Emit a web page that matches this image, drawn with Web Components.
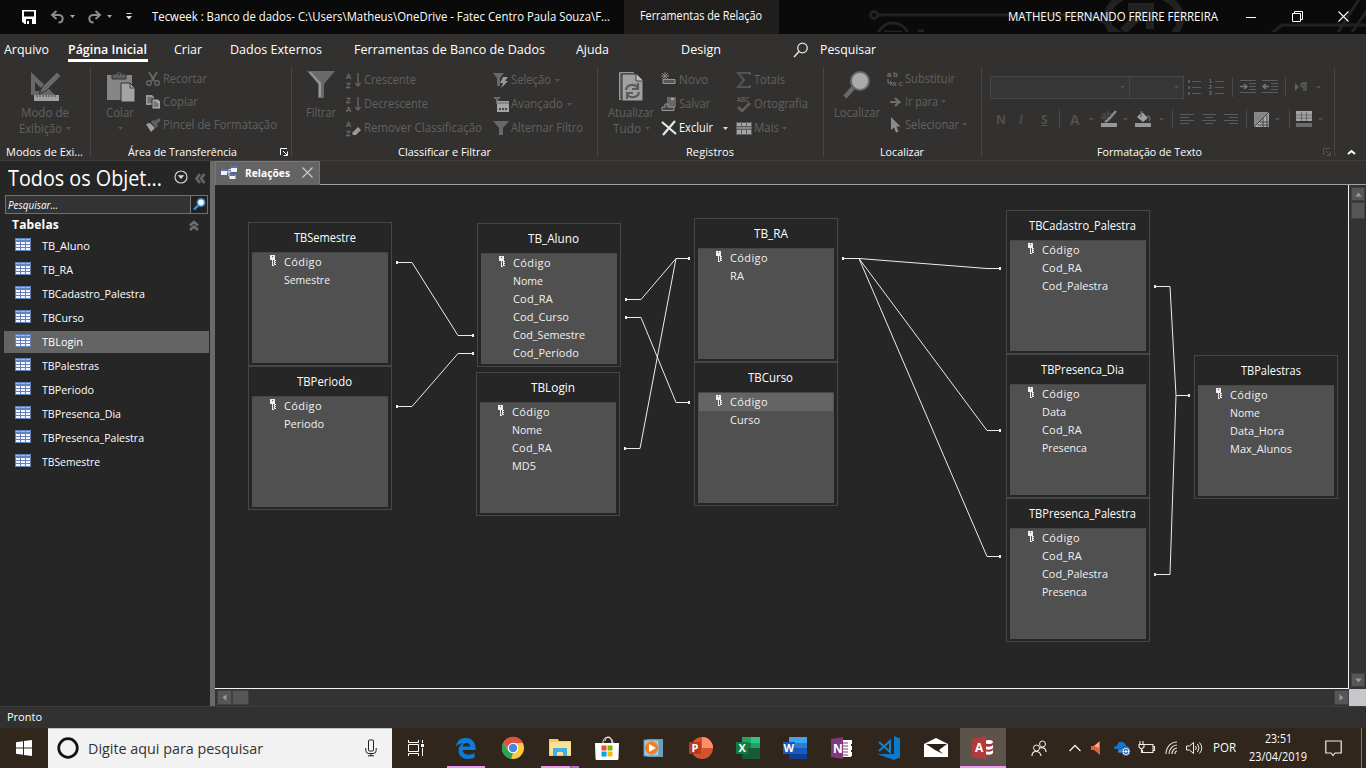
<!DOCTYPE html>
<html lang="pt-BR">
<head>
<meta charset="utf-8">
<title>Tecweek : Banco de dados</title>
<style>
html,body{margin:0;height:768px;overflow:hidden;background:#262626;font-family:"Open Sans","Noto Sans",sans-serif;font-size:12px;color:#fff}
</style>
</head>
<body>
<access-app></access-app>
<script>
const css = s => `<style>:host{display:block;box-sizing:border-box}*{box-sizing:border-box}${s}</style>`;
const LS = 'font-family="Liberation Sans"';
const ICONS = {
  save:[16,16,'<path d="M1 1h14v14H3.500L1 12.500z" fill="#fff"/><path d="M3 2.500h10v5H3zM5 10h6v5H5z" fill="#0a0a0a"/><path d="M6 12h2v3H6z" fill="#fff"/>'],
  undo:[16,16,'<path d="M6.500 2L2 6l4.500 4M2.500 6H9c5 0 5 7.500-.5 7.500" fill="none" stroke="#8c8c8c" stroke-width="2"/>'],
  redo:[16,16,'<path d="M9.500 2L14 6l-4.500 4M13.500 6H7c-5 0-5 7.500.5 7.500" fill="none" stroke="#8c8c8c" stroke-width="2"/>'],
  drop:[5,3,'<path d="M0 0h5L2.500 3z" fill="currentColor"/>'],
  qat:[6,7,'<path d="M.5 0h5v1h-5zM0 3h6L3 6.500z" fill="#ddd"/>'],
  min:[10,10,'<path d="M0 5.500h10" stroke="#fff"/>'],
  restore:[11,11,'<path d="M.5 2.500h8v8h-8zM2.500 2V.5h8v8H9" fill="none" stroke="#fff"/>'],
  close:[11,11,'<path d="M.5.5l10 10M10.500.5l-10 10" stroke="currentColor" stroke-width="1.100"/>'],
  search:[16,16,'<circle cx="9.500" cy="6" r="4.800" fill="none" stroke="#eee" stroke-width="1.200"/><path d="M6 9.500L1 15" stroke="#eee" stroke-width="1.400"/>'],
  design:[32,32,'<path d="M2 1v23h24zM6 11l9 9H6z" fill="#686868" fill-rule="evenodd"/><path d="M28 1l4 4L17 20l-7 3 3-7z" fill="#686868" stroke="#32312f" stroke-width="1"/><path d="M5 24h25v6H5z" fill="#a0a0a0"/><path d="M8 24v2m3-2v2m3-2v2m3-2v2m3-2v2m3-2v2m3-2v2" stroke="#444"/>'],
  paste:[29,32,'<path d="M1 4h25v25H1z" fill="#868686"/><path d="M6 3h4c0-3 6-3 6 0h4v5H6z" fill="#5e5e5e" stroke="#32312f"/><circle cx="13" cy="3" r="1" fill="#32312f"/><path d="M15 12h9l5 5v14H15z" fill="#a4a4a4" stroke="#32312f"/><path d="M24 12v5h5" fill="none" stroke="#444"/>'],
  cut:[16,16,'<path d="M4 1l5.500 9M12 1L6.500 10" stroke="#686868" stroke-width="1.800"/><circle cx="4" cy="12" r="2.300" fill="none" stroke="#666" stroke-width="1.400"/><circle cx="12" cy="12" r="2.300" fill="none" stroke="#666" stroke-width="1.400"/>'],
  copy:[16,16,'<path d="M1 1h6l2 2v8H1z" fill="#999"/><path d="M2.500 4h5m-5 2h5m-5 2h5" stroke="#444"/><path d="M7 5h6l2.500 2.500V15H7z" fill="#aaa" stroke="#32312f"/><path d="M8.500 8h3m-3 2h5m-5 2h5" stroke="#444"/>'],
  brush:[16,16,'<path d="M1 7l4-1 5 5-4 4z" fill="#a0a0a0"/><path d="M6 5l2-2 2 1 4-3 2 2-4 4 1 2-2 2z" fill="#606060"/>'],
  filter:[28,28,'<path d="M0 0h28L17 13v14h-6V13z" fill="#6a6a6a"/><path d="M2 1l10 12v13h2V12L4 1z" fill="#999"/>'],
  az:[16,16,`<text x="0" y="6.500" font-size="7.500" ${LS} fill="#707070" stroke="#707070" stroke-width=".3">A</text><text x="0" y="15.500" font-size="7.500" ${LS} fill="#707070" stroke="#707070" stroke-width=".3">Z</text><path d="M12 1v13M9.500 11l2.500 3 2.500-3" stroke="#666" fill="none" stroke-width="1.300"/>`],
  za:[16,16,`<text x="0" y="6.500" font-size="7.500" ${LS} fill="#707070" stroke="#707070" stroke-width=".3">Z</text><text x="0" y="15.500" font-size="7.500" ${LS} fill="#707070" stroke="#707070" stroke-width=".3">A</text><path d="M12 1v13M9.500 11l2.500 3 2.500-3" stroke="#666" fill="none" stroke-width="1.300"/>`],
  azx:[16,16,`<text x="0" y="6.500" font-size="7.500" ${LS} fill="#707070" stroke="#707070" stroke-width=".3">A</text><text x="0" y="15.500" font-size="7.500" ${LS} fill="#707070" stroke="#707070" stroke-width=".3">Z</text><path d="M6 13l6-6 3 3-5 5H7z" fill="#999"/>`],
  fsel:[16,16,'<path d="M0 1h11L7 6v8H4V6z" fill="#686868"/><path d="M10 5h5l-3 4h3l-7 7 2-5H7z" fill="#999"/>'],
  fadv:[16,16,'<path d="M0 1h8L5 4v4H3V4z" fill="#686868"/><path d="M4 5h12v11H4z" fill="#a4a4a4"/><path d="M6 12h2v2H6zm3 0h2v2H9zm3 0h2v2h-2z" fill="#444"/><path d="M4 7h12" stroke="#666"/>'],
  ftog:[16,16,'<path d="M0 1h16l-6 7v7H6V8z" fill="#686868"/>'],
  refresh:[26,32,'<path d="M1.500 1.500h14v27h-14z" fill="#666" stroke="#999"/><path d="M4 3h15l6 6v21H4z" fill="#a0a0a0" stroke="#32312f"/><path d="M18 3v7h7" fill="#bbb" stroke="#444"/><path d="M8 19c1-6 9-7 12-2M20 12v6h-6M21 21c-1 6-9 7-12 2M9 28v-6h6" fill="none" stroke="#5c5c5c" stroke-width="2.200"/>'],
  novo:[16,16,'<path d="M2 7.500h12v4H2z" fill="#555" stroke="#999"/><path d="M4 0v8M0 4h8M1 1l6 6M7 1L1 7" stroke="#888"/>'],
  salvar:[16,16,'<path d="M6 1h9v10H6z" fill="#666"/><path d="M10 2h3v2h-3z" fill="#aaa"/><path d="M1 11h3V8h3v3h6v3.500H1z" fill="#444" stroke="#999"/>'],
  del:[16,16,'<path d="M1 2l14 12M14 1L2 15" stroke="#e8e8e8" stroke-width="2.200"/>'],
  sum:[16,16,'<path d="M14 3V1H2l6 7-6 7h12v-2" fill="none" stroke="#555" stroke-width="2"/>'],
  abc:[16,17,'<text x="1" y="6" font-size="6.500" fill="#777">ABC</text><path d="M2 11l4 4 8-8" stroke="#606060" fill="none" stroke-width="2.500"/>'],
  mais:[16,16,'<path d="M0 2h16v13H0z" fill="#5e5e5e"/><path d="M1 3h4v3H1zm5 0h4v3H6zm5 0h4v3h-4zM1 10h4v4H1zm5 0h4v4H6zm5 0h4v4h-4z" fill="#a5a5a5"/><path d="M1 7h14v2H1z" fill="#888"/>'],
  find:[28,30,'<circle cx="17" cy="10" r="9" fill="#aaa" stroke="#696969" stroke-width="2"/><path d="M10 17L2 26" stroke="#696969" stroke-width="4.500"/>'],
  subs:[16,17,`<text x="0" y="7" font-size="8" ${LS} font-weight="700" fill="#707070" textLength="11">ab</text><text x="5" y="16" font-size="8" ${LS} font-weight="700" fill="#666" textLength="11">ac</text><path d="M1 9v4h3M3 11l2 2-2 2" stroke="#777" fill="none"/>`],
  goto:[16,16,'<path d="M3 8h9M8 4l4.500 4L8 12" stroke="#6d6d6d" fill="none" stroke-width="2.200"/>'],
  cursor:[16,16,'<path d="M4 0v13l3-2.500 2 5 2.500-1-2-5h4z" fill="#8b8b8b"/>'],
  bul:[14,16,'<path d="M5 2.500h9M5 8.500h9M5 14.500h9" stroke="#5a5a5a"/><path d="M1 1h2v3H1zm0 6h2v3H1zm0 6h2v3H1z" fill="#5a5a5a"/>'],
  num:[15,16,`<path d="M6 2.500h9M6 8.500h9M6 14.500h9" stroke="#5a5a5a"/><text x="0" y="4" font-size="5" ${LS} font-weight="700" fill="#777">1</text><text x="0" y="10" font-size="5" ${LS} font-weight="700" fill="#777">2</text><text x="0" y="16" font-size="5" ${LS} font-weight="700" fill="#777">3</text>`],
  ind:[16,16,'<path d="M0 1.500h16M9 4.500h7M9 7.500h7M9 10.500h7M0 13.500h16" stroke="#5c5c5c"/><path d="M0 7.500h6M4 5l3 2.500L4 10" stroke="#777" fill="none" stroke-width="1.500"/>'],
  outd:[16,16,'<path d="M0 1.500h16M9 4.500h7M9 7.500h7M9 10.500h7M0 13.500h16" stroke="#5c5c5c"/><path d="M1 7.500h6M4 5L1 7.500 4 10" stroke="#777" fill="none" stroke-width="1.500"/>'],
  para:[13,10,'<path d="M0 1l4 4-4 4z" fill="#606060"/><path d="M9 9V1h3M11 1v8M9 1C5 1 5 5 9 5" stroke="#606060" fill="none" stroke-width="1.300"/>'],
  hilite:[17,17,'<text x="0" y="8" font-size="10" fill="#5c5c5c">ab</text><path d="M15 0L7 9l-3 2" stroke="#888" stroke-width="2.500" fill="none"/><path d="M0 12h16v4H0z" fill="#989898"/>'],
  bucket:[17,17,'<path d="M7 1l6 6-5 4-6-5z" fill="#a0a0a0"/><path d="M6 6V1h2M12 5c4 0 3 4 2 5" stroke="#666" fill="none" stroke-width="1.500"/><path d="M0 12h16v4H0z" fill="#989898"/>'],
  al:[14,12,'<path d="M0 1.500h14M0 4.500h9M0 7.500h14M0 10.500h9" stroke="#5c5c5c"/>'],
  ac:[14,12,'<path d="M0 1.500h14M3 4.500h8M0 7.500h14M3 10.500h8" stroke="#5c5c5c"/>'],
  ar:[14,12,'<path d="M0 1.500h14M5 4.500h9M0 7.500h14M5 10.500h9" stroke="#5c5c5c"/>'],
  altc:[15,15,'<path d="M.5.5h14v14H.5z" fill="#858585" stroke="#bbb" stroke-dasharray="1 1"/><path d="M15 0L0 15h15z" fill="#aaa"/><path d="M15 0L0 15M6 10h9M9 6v9M13 3v12M4 13h11" stroke="#444" fill="none"/>'],
  grid2:[16,16,'<path d="M0 0h16v10H0z" fill="#a5a5a5"/><path d="M0 4h16M0 7h16M5.500 1v9M10.500 1v9" stroke="#666"/><path d="M0 12h16v4H0z" fill="#6c6c6c"/>'],
  launch:[8,8,'<path d="M.5 7V.5H7" fill="none" stroke="currentColor"/><path d="M3 3l4 4M7.500 3.500v4h-4" stroke="currentColor" fill="none"/>'],
  up:[9,6,'<path d="M1 5l3.500-3L8 5" stroke="#fff" stroke-width="2" fill="none"/>'],
  circ:[14,14,'<circle cx="7" cy="7" r="6" fill="none" stroke="#d0d0d0" stroke-width="1.200"/><path d="M3.800 5.300h6.400L7 9z" fill="#ddd"/>'],
  dbl:[11,11,'<path d="M5 1L1.500 5.500 5 10M9.500 1L6 5.500l3.500 4.500" stroke="#666" fill="none" stroke-width="2.600"/>'],
  dblup:[10,11,'<path d="M1 5.500L5 2l4 3.500M1 10l4-3.500L9 10" stroke="#6e6e6e" fill="none" stroke-width="2.600"/>'],
  bsearch:[15,15,'<circle cx="9" cy="5.500" r="3.700" fill="#f3faff" stroke="#4586cf" stroke-width="1.600"/><path d="M6 8.500L2 12.500" stroke="#4290dd" stroke-width="2.400"/>'],
  table:[16,13,'<path d="M0 0h16v13H0z" fill="#6382ba"/><path d="M1 4h4v2H1zm5 0h4v2H6zm5 0h4v2h-4zM1 7h4v2H1zm5 0h4v2H6zm5 0h4v2h-4zM1 10h4v2H1zm5 0h4v2H6zm5 0h4v2h-4z" fill="#f2f5fa"/><path d="M1 1h4v1H1zm5 0h4v1H6zm5 0h4v1h-4z" fill="#a9bbe0"/>'],
  rel:[16,15,'<path d="M6 7h4M8 4v7M8 4.500h3M8 11h2" stroke="#ddd" fill="none"/><path d="M0 4h6v6H0zm10-3h6v6h-6zM8.500 9h6v5h-6z" fill="#eef2ff"/><path d="M0 4h6v2H0zm10-3h6v2h-6zM8.500 9h6v2h-6z" fill="#4b77c9"/>'],
  key:[6,12,'<path d="M0 0h5v5h1v1H5v1h1v1H5v1h1v1H4v1H2V5H0z" fill="#eee"/><path d="M2 1h1v1H2zM3 5h1v5H3z" fill="#555"/>'],
  win:[16,16,'<path d="M0 2.300l7-1V7.500H0zM8 1.100L16 0v7.500H8zM0 8.500h7v6.200l-7-1zM8 8.500h8V16l-8-1.100z" fill="#fff"/>'],
  cort:[22,22,'<circle cx="11" cy="11" r="9.300" fill="none" stroke="#111" stroke-width="2.700"/>'],
  mic:[12,18,'<rect x="3.500" y="1" width="5" height="11" rx="1" fill="none" stroke="#222"/><path d="M.8 9v2.500q0 3 3 3h4.400q3 0 3-3V9M6 14.500V17M3 16.800h6" fill="none" stroke="#222"/>'],
  task:[18,16,'<path d="M1.500 4.500h10v7h-10zM1.500 0v2.500h10V0M1.500 16v-2.500h10V16M15.500 0v3M15.500 8v8" stroke="#fff" fill="none"/><path d="M14 4h3v3h-3z" fill="#fff"/>'],
  edge:[22,22,'<path d="M1 9.500C2 3 6 1 11 1c6 0 9.500 4.500 9.500 9.500V13H7.500c.2 5 7.500 6 12 3v4.500C12 24 3.500 21 3.500 14c0-4 2-6.500 5-8C5.500 6.500 2.500 7.500 1 9.500zM7.500 9.500H15c0-5-7-4.500-7.500 0z" fill="#0b7bdc"/>'],
  chrome:[24,24,'<circle cx="12" cy="12" r="11" fill="#f9cb3d"/><path d="M2.500 6.500A11 11 0 0 1 22 7H12L7.500 14z" fill="#df5145"/><path d="M2.500 6.500L7.500 15l4.500 2-2 5.900A11 11 0 0 1 2.500 6.500z" fill="#2aa25d"/><circle cx="12" cy="12" r="5.300" fill="#fff"/><circle cx="12" cy="12" r="4.200" fill="#4a86e5"/>'],
  folder:[22,20,'<path d="M0 1h9l1 2h12v15H0z" fill="#f3cb55"/><path d="M1 4h21v13H1z" fill="#fbe293"/><path d="M4 18v-8h14v8h-4v-4H8v4z" fill="#39b1e8"/>'],
  store:[24,24,'<path d="M0 7h24l-.5 15.500q0 1.500-1.500 1.500H2Q.5 24 .5 22.500z" fill="#fff"/><path d="M8 7c0-8 9-7 9 0M10 5c1-6 7-5 8 2" stroke="#fff" fill="none"/><path d="M6.500 9.500h5v5h-5z" fill="#f05022"/><path d="M12.500 9.500h5v5h-5z" fill="#7db700"/><path d="M6.500 15.500h5v5h-5z" fill="#00a3ee"/><path d="M12.500 15.500h5v5h-5z" fill="#ffb800"/>'],
  media:[21,20,'<path d="M4 1h16v18H4z" fill="#6ba0bf"/><path d="M1 2h15v16H1z" fill="#a7c8dc" stroke="#6599b8"/><circle cx="8.500" cy="10" r="6.500" fill="#f07c23"/><path d="M6 6l7 4-7 4z" fill="#fff"/>'],
  ppt:[24,22,'<circle cx="13" cy="11" r="11" fill="#d35230"/><path d="M13 0a11 11 0 0 1 11 11H13z" fill="#ff8f6b"/><path d="M0 5h12v12H0z" fill="#b83b1d"/><text x="2.500" y="15" font-size="11" font-weight="700" fill="#fff">P</text>'],
  xls:[24,22,'<path d="M6 0h18v22H6z" fill="#185c37"/><path d="M6 0h9v6H6zM15 6h9v5h-9z" fill="#21a366"/><path d="M15 0h9v6h-9z" fill="#33c481"/><path d="M6 6h9v5H6z" fill="#107c41"/><path d="M0 5h12v12H0z" fill="#107c41"/><text x="2.500" y="15" font-size="11" font-weight="700" fill="#fff">X</text>'],
  doc:[24,22,'<path d="M6 0h18v6H6z" fill="#41a5ee"/><path d="M6 6h18v5H6z" fill="#2b7cd3"/><path d="M6 11h18v6H6z" fill="#185abd"/><path d="M6 17h18v5H6z" fill="#103f91"/><path d="M0 5h12v12H0z" fill="#185abd"/><text x=".5" y="15" font-size="11" font-weight="700" fill="#fff">W</text>'],
  one:[24,24,'<path d="M12 4h9v17h-9z" fill="#fff"/><path d="M13 7h5m-5 3h5m-5 3h5m-5 3h5m-5 3h5" stroke="#80397b"/><path d="M20 4h2v4h-2zm0 6h2v4h-2zm0 6h2v4h-2z" fill="#fff"/><path d="M1 3l12-2v22L1 21z" fill="#80397b"/><text x="3" y="16.500" font-size="12" font-weight="700" fill="#fff">N</text>'],
  code:[25,24,'<path d="M18 0l6 2.500v19L18 24 1 18h17z" fill="#0a7acc"/><path d="M3 6l11 10V5L3 15" fill="none" stroke="#167fca" stroke-width="2"/>'],
  mail:[24,20,'<path d="M0 6L12 0l12 6v13H0z" fill="#fff"/><path d="M2 6h21l-8 6 4 4-8-4z" fill="#292017"/>'],
  access:[23,24,'<path d="M12 4h10v16H12z" fill="#a4373a"/><path d="M12 5c4-2 9-1 9 1s-5 3-9 1zm0 5q7 2 9-1v3q-2 3-9 1zm0 5q7 2 9-1v3q-2 3-9 1z" fill="#fff"/><path d="M0 3l14-3v24L0 21z" fill="#b13a3d"/><text x="3" y="16" font-size="12" font-weight="700" fill="#fff">A</text>'],
  people:[16,17,'<circle cx="5.500" cy="8" r="3" fill="none" stroke="#eee"/><circle cx="11.500" cy="4" r="3" fill="none" stroke="#eee"/><path d="M1 16c0-6 8-6 9 0M9 8c3-1 6 0 6 4" fill="none" stroke="#eee" stroke-width="1.200"/>'],
  chev:[12,8,'<path d="M.5 7L6 1.500 11.500 7" fill="none" stroke="#eee" stroke-width="1.400"/>'],
  rvol:[12,14,'<path d="M0 5h3l6-5v14L3 9H0z" fill="#df6040"/><path d="M3 5l5-4v6z" fill="#f5aa87"/>'],
  cloud:[17,15,'<path d="M0 8q0-3 3-3Q4 0 8 1q3 0 4 4 3 0 3 3v3H7q-4 0-3-3z" fill="#1177d0"/><path d="M4 12q-1-4 3-4 1-3 4-2 3 0 3 3l-2 3z" fill="#3b8fe0" stroke="#30261c" stroke-width=".6"/><circle cx="12" cy="10.500" r="4" fill="#fff" stroke="#2f66b8"/><path d="M10 10q2-3 4 0M14 11q-2 3-4 0" stroke="#2f66b8" fill="none" stroke-width="1.400"/>'],
  bat:[17,14,'<path d="M6 3.500h9v8H4.500V9M15 5.500h1.500v4H15M2 0v3M5 0v3M1 3.500h5V6L4 8H3L1 6zM3.500 8v4" fill="none" stroke="#eee" stroke-width="1.100"/>'],
  wifi:[13,14,'<path d="M1 13C1 6 6 1 12 1M4 13c0-5 4-9 8-9M7 13c0-3 2-6 5-6M10 13c0-2 1-3 2-3" stroke="#ddd" fill="none" stroke-width="1.200"/>'],
  spk:[17,14,'<path d="M.5 5h3l4-3.500v11L3.500 9h-3z" fill="none" stroke="#eee"/><path d="M9.500 5q1.500 2 0 4M11.500 3q3 4 0 8M13.500 1.500q4.500 5.500 0 11" fill="none" stroke="#eee"/>'],
  notif:[17,17,'<path d="M.8 1h15.400v12H10l-2 2.500L6 13H.8z" fill="none" stroke="#eee" stroke-width="1.200"/>'],
};
const ic = (n, st='') => `<ui-icon name="${n}" style="${st}"></ui-icon>`;
const tx = (t, w, st='') => `<fit-text w="${w}" style="${st}">${t}</fit-text>`;

customElements.define('ui-icon', class extends HTMLElement {
  connectedCallback(){
    const [w,h,p] = ICONS[this.getAttribute('name')];
    (this.shadowRoot||this.attachShadow({mode:'open'})).innerHTML = css(`:host{flex:none;width:${w}px;height:${h}px}svg{display:block;overflow:visible;font-family:"Open Sans",sans-serif}`) +
      `<svg width="${w}" height="${h}" viewBox="0 0 ${w} ${h}">${p}</svg>`;
  }
});

const define = (name, html) => customElements.define(name, class extends HTMLElement {
  connectedCallback(){ if(!this.shadowRoot) this.attachShadow({mode:'open'}).innerHTML = html(this); }
});

define('title-bar', () => css(`
  :host{height:34px;background:#0a0a0a;display:flex;align-items:center;position:relative;padding-bottom:1px}
  .art{position:absolute;left:860px;top:0}
  .tool{align-self:stretch;margin:0 0 -1px 14px;width:155px;background:#1f1e1c;padding:8px 0 0 16px}
  fit-text,ui-icon{position:relative}
`) + `<svg class="art" width="506" height="32" fill="none" stroke="#222" stroke-width="3">
  <circle cx="14" cy="15" r="3.500"/><path d="M18 15h214l29 18M412 33l10-8h84M478 32l22-34M492 32l24-34"/><circle cx="33" cy="39" r="16"/><path d="M24 32h18M58 31h6"/><path d="M262-3c-18 10-18 25-8 37M304-3c20 10 20 25 10 37" stroke-width="7"/><path d="M263 31l26-25M268 7h22v22" stroke-width="8"/></svg>
  ${ic('save','margin-left:21px')}${ic('undo','margin-left:13px')}${ic('drop','margin-left:4px;color:#aaa')}${ic('redo','margin-left:11px')}${ic('drop','margin-left:5px;color:#aaa')}${ic('qat','margin-left:14px')}
  ${tx('Tecweek : Banco de dados- C:\\Users\\Matheus\\OneDrive - Fatec Centro Paula Souza\\F...',458,'margin-left:20px')}
  <div class="tool">${tx('Ferramentas de Relação',122)}</div>
  ${tx('MATHEUS FERNANDO FREIRE FERREIRA',210,'margin-left:229px')}
  ${ic('min','margin-left:28px')}${ic('restore','margin-left:36px')}${ic('close','margin-left:35px')}`);

define('ribbon-tabs', () => css(`
  :host{height:34px;display:flex;font-size:13px;padding:7px 0 0 4px}
  .on{font-weight:600;width:80px;height:21px;border-bottom:3px solid #fff}
`) + `${tx('Arquivo',45)}<div class="on" style="margin-left:19px">${tx('Página Inicial',79)}</div>${tx('Criar',28,'margin-left:26px')}${tx('Dados Externos',92,'margin-left:28px')}${tx('Ferramentas de Banco de Dados',191,'margin-left:32px')}${tx('Ajuda',33,'margin-left:31px')}${tx('Design',40,'margin-left:72px')}${ic('search','margin:1px 0 0 72px')}${tx('Pesquisar',56,'margin-left:11px')}`);

define('ribbon-group', h => css(`
  :host{width:${h.getAttribute('w')}px;flex:none;border-right:1px solid #484746;display:flex;flex-direction:column;height:88px}
  .b{display:flex;height:76px;flex:none}
  .t{display:flex;height:16px;flex:none;align-items:center;color:#fff;font-size:11px}
`) + `<div class="b"><slot></slot></div><div class="t">${tx(h.getAttribute('t'),h.getAttribute('tw'),`margin-left:${h.getAttribute('tx')}px`)}<slot name="launch"></slot></div>`);

define('big-button', h => css(`
  :host{width:${h.getAttribute('w')}px;flex:none;color:#626160;display:grid;justify-items:center;grid-template-rows:34px 16px 15px;padding-top:3px}
  .r{display:flex;align-items:center;gap:4px}
`) + ic(h.getAttribute('i')) + tx(h.getAttribute('a'),h.getAttribute('aw')) + `<div class="r">${h.hasAttribute('b')?tx(h.getAttribute('b'),h.getAttribute('bw')):''}${h.hasAttribute('d')?ic('drop','color:#535353'):''}</div>`);

define('ribbon-cmd', h => css(`
  :host{display:flex;align-items:center;height:${h.getAttribute('h')||24}px;color:${h.hasAttribute('on')?'#fff':'#626160'}}
  .i{width:18px;flex:none}
`) + `<div class="i">${ic(h.getAttribute('i'))}</div>${tx(h.getAttribute('t'),h.getAttribute('w'))}${h.hasAttribute('d')?ic('drop',`margin-left:${h.getAttribute('d')||4}px;color:${h.hasAttribute('on')?'#ddd':'#535353'}`):''}`);

define('text-format', () => css(`
  :host{width:344px;margin-left:8px;padding-top:8px;color:#505050}
  .r{display:flex;align-items:center;height:22px}.r+.r{margin-top:10px}
  .c{height:23px;border:1px solid #464646;background:#363636;display:flex;align-items:center;justify-content:flex-end;padding-right:4px;flex:none}
  .s{width:1px;height:20px;background:#4a4a4a;flex:none}
  b{font-size:12px;width:10px;flex:none}
`) + `<div class="r"><div class="c" style="width:140px">${ic('drop')}</div><div class="c" style="width:55px;margin-left:-1px">${ic('drop')}</div>${ic('bul','margin-left:3px')}${ic('num','margin-left:8px')}<div class="s" style="margin-left:8px"></div>${ic('ind','margin-left:7px')}${ic('outd','margin-left:6px')}<div class="s" style="margin-left:7px"></div>${ic('para','margin-left:9px')}${ic('drop','margin-left:8px')}</div>
 <div class="r"><b style="margin-left:6px">N</b><b style="margin-left:13px"><i>I</i></b><b style="margin-left:12px"><u>S</u></b><div class="s" style="margin-left:8px"></div><b style="margin-left:10px;font-size:14px">A</b>${ic('drop','margin-left:9px')}${ic('hilite','margin-left:7px')}${ic('drop','margin-left:5px')}${ic('bucket','margin-left:7px')}${ic('drop','margin-left:7px')}<div class="s" style="margin-left:8px"></div>${ic('al','margin-left:7px')}${ic('ac','margin-left:8px')}${ic('ar','margin-left:8px')}<div class="s" style="margin-left:8px"></div>${ic('altc','margin-left:7px')}${ic('drop','margin-left:6px')}<div class="s" style="margin-left:9px"></div>${ic('grid2','margin-left:6px')}${ic('drop','margin-left:6px')}</div>`);

define('ribbon-body', () => css(`
  :host{height:93px;display:flex;border-bottom:1px solid #3e3d3c}
  .col{display:flex;flex-direction:column}
  .t1{margin-top:-1px}
`) + `
<ribbon-group w="91" t="Modos de Exi..." tw="77" tx="6"><big-button w="90" i="design" a="Modo de" aw="48" b="Exibição" bw="43" d></big-button></ribbon-group>
<ribbon-group w="201" t="Área de Transferência" tw="109" tx="37"><big-button w="58" i="paste" a="Colar" aw="28" d></big-button>
 <div class="col t1" style="margin-left:-4px"><ribbon-cmd h="23" i="cut" t="Recortar" w="44"></ribbon-cmd><ribbon-cmd h="23" i="copy" t="Copiar" w="35"></ribbon-cmd><ribbon-cmd h="23" i="brush" t="Pincel de Formatação" w="114"></ribbon-cmd></div>
 <ui-icon slot="launch" name="launch" style="margin-left:43px"></ui-icon></ribbon-group>
<ribbon-group w="306" t="Classificar e Filtrar" tw="93" tx="106"><big-button w="57" i="filter" a="Filtrar" aw="30"></big-button>
 <div class="col" style="margin-left:-3px"><ribbon-cmd i="az" t="Crescente" w="52"></ribbon-cmd><ribbon-cmd i="za" t="Decrescente" w="64"></ribbon-cmd><ribbon-cmd i="azx" t="Remover Classificação" w="118"></ribbon-cmd></div>
 <div class="col" style="margin-left:11px"><ribbon-cmd i="fsel" t="Seleção" w="40" d="4"></ribbon-cmd><ribbon-cmd i="fadv" t="Avançado" w="52" d="4"></ribbon-cmd><ribbon-cmd i="ftog" t="Alternar Filtro" w="72"></ribbon-cmd></div></ribbon-group>
<ribbon-group w="226" t="Registros" tw="48" tx="88"><big-button w="66" i="refresh" a="Atualizar" aw="46" b="Tudo" bw="28" d></big-button>
 <div class="col" style="margin-left:-3px"><ribbon-cmd i="novo" t="Novo" w="29"></ribbon-cmd><ribbon-cmd i="salvar" t="Salvar" w="31"></ribbon-cmd><ribbon-cmd on i="del" t="Excluir" w="34" d="10"></ribbon-cmd></div>
 <div class="col" style="margin-left:8px"><ribbon-cmd i="sum" t="Totais" w="31"></ribbon-cmd><ribbon-cmd i="abc" t="Ortografia" w="54"></ribbon-cmd><ribbon-cmd i="mais" t="Mais" w="25" d="3"></ribbon-cmd></div></ribbon-group>
<ribbon-group w="158" t="Localizar" tw="44" tx="56"><big-button w="66" i="find" a="Localizar" aw="46"></big-button>
 <div class="col t1" style="margin-left:-3px"><ribbon-cmd h="23" i="subs" t="Substituir" w="50"></ribbon-cmd><ribbon-cmd h="23" i="goto" t="Ir para" w="33" d="3"></ribbon-cmd><ribbon-cmd h="23" i="cursor" t="Selecionar" w="54" d="3"></ribbon-cmd></div></ribbon-group>
<ribbon-group w="353" t="Formatação de Texto" tw="105" tx="115"><text-format></text-format><ui-icon slot="launch" name="launch" style="margin-left:121px;color:#555"></ui-icon></ribbon-group>
${ic('up','margin:81px 0 0 12px')}`);

const TREE = [['TB_Aluno',48],['TB_RA',31],['TBCadastro_Palestra',103],['TBCurso',42],['TBLogin',41],['TBPalestras',57],['TBPeriodo',52],['TBPresenca_Dia',79],['TBPresenca_Palestra',102],['TBSemestre',58]];
define('nav-pane', () => css(`
  :host{width:210px;flex:none;background:#262626;padding-top:4px}
  .h{display:flex;align-items:center;height:26px;padding-left:8px;font-size:21px}
  .s{margin:4px 2px 0 5px;height:19px;border:1px solid #707070;background:#333;display:flex;align-items:center;font-size:11px;font-style:italic;padding-left:2px}
  .q{margin-left:auto;width:17px;height:17px;border-left:1px solid #777;background:#222;padding:1px}
  .c{display:flex;align-items:center;height:20px;padding-left:12px;font-weight:700;margin-top:1px}
  .i{display:flex;align-items:center;height:22px;margin:0 1px 2px 4px;padding-left:11px;font-size:11px}
  .on{background:#646464}
`) + `<div class="h">${tx('Todos os Objet...',154,'line-height:26px;height:26px')}${ic('circ','margin:-3px 0 0 12px')}${ic('dbl','margin-left:7px')}</div>
<div class="s">${tx('Pesquisar...',50)}<div class="q">${ic('bsearch')}</div></div>
<div class="c">${tx('Tabelas',47)}${ic('dblup','margin-left:130px')}</div>` +
TREE.map(([t,w])=>`<div class="i ${t=='TBLogin'?'on':''}">${ic('table','margin-top:-3px')}${tx(t,w,'margin-left:11px')}</div>`).join(''));

const FW = {'Código':38,Semestre:46,Periodo:40,Nome:30,Cod_RA:40,Cod_Curso:56,Cod_Semestre:72,'Cod_Período':66,RA:14,MD5:24,Curso:30,Cod_Palestra:66,Data:24,Presenca:45,Data_Hora:54,Max_Alunos:62};
define('db-table', h => css(`
  :host{position:absolute;left:${h.getAttribute('x')-215}px;top:${h.getAttribute('y')-185}px;width:144px;height:144px;border:1px solid #464646;background:#262626;padding:0 3px}
  .t{height:29px;display:flex;justify-content:center;align-items:center;padding:0 0 0 9px}
  .b{height:111px;background:#505050;border-top:1px solid #464646;font-size:11px;color:#f0f0f0}
  .r{display:flex;align-items:center;height:18px;padding-left:18px}
  .k{width:14px;height:14px}
  .on .r:first-child{background:#646464;margin:0 1px;padding-left:17px}
`) + `<div class="t">${tx(h.getAttribute('t'),h.getAttribute('w'))}</div><div class="b ${h.hasAttribute('on')?'on':''}">` +
h.getAttribute('f').split(',').map((f,i)=>`<div class="r"><div class="k">${i?'':ic('key')}</div>${tx(f,FW[f])}</div>`).join('') + '</div>');

const TABLES = [[248,222,'TBSemestre',62,'Código,Semestre'],[248,366,'TBPeriodo',55,'Código,Periodo'],[477,223,'TB_Aluno',51,'Código,Nome,Cod_RA,Cod_Curso,Cod_Semestre,Cod_Período'],[476,372,'TBLogin',44,'Código,Nome,Cod_RA,MD5'],[694,218,'TB_RA',34,'Código,RA'],[694,362,'TBCurso',45,'Código,Curso'],[1006,210,'TBCadastro_Palestra',107,'Código,Cod_RA,Cod_Palestra'],[1006,354,'TBPresenca_Dia',83,'Código,Data,Cod_RA,Presenca'],[1006,498,'TBPresenca_Palestra',107,'Código,Cod_RA,Cod_Palestra,Presenca'],[1194,355,'TBPalestras',60,'Código,Nome,Data_Hora,Max_Alunos']];
const LINKS = [[397,262,412,262,458,335,474,335],[397,406,412,406,458,353,474,353],[626,299,641,299,676,258,690,258],[626,317,641,317,676,402,690,402],[625,448,640,448,676,258,690,258],[843,258,859,258,987,268,1001,268],[843,258,859,258,987,430,1001,430],[843,258,859,258,987,556,1001,556],[1155,286,1170,286,1176,395,1190,395],[1155,574,1170,574,1176,395,1190,395]];
define('relation-canvas', () => css(`
  :host{position:relative;width:1134px;height:504px;border-right:1px solid #f2f2f2;border-bottom:1px solid #f2f2f2;background:#262626}
  svg{position:absolute;left:0;top:0}
`) + TABLES.map(([x,y,t,w,f])=>`<db-table x="${x}" y="${y}" t="${t}" w="${w}" f="${f}" ${t=='TBCurso'?'on':''}></db-table>`).join('') +
`<svg width="1133" height="503" viewBox="215 184.500 1133 503" fill="none" stroke="#ededed">` + LINKS.map(p=>{const n=p.length;return `<polyline points="${p.join(' ')}"/><path d="M${p[0]-1} ${p[1]}h2M${p[n-2]-2} ${p[n-1]}h2" stroke-width="3"/>`}).join('') + '</svg>');

define('scroll-v', () => css(`
  :host{width:17px;height:504px;background:#333;padding:2px 0 0 2px;display:flex;flex-direction:column}
  div{width:14px;height:14px;background:#565656;border:1px solid #404040;display:flex;align-items:center;justify-content:center;flex:none}
`) + `<div>${ic('drop','color:#999;transform:rotate(180deg) scale(1.3)')}</div><div style="height:17px;margin-top:1px"></div><div style="margin-top:auto;margin-bottom:2px">${ic('drop','color:#999;transform:scale(1.3)')}</div>`);
define('scroll-h', () => css(`
  :host{height:17px;background:#333;display:flex;align-items:center;padding-left:2px}
  div{width:15px;height:15px;background:#565656;border:1px solid #404040;display:flex;align-items:center;justify-content:center}
  .c{margin:0;width:17px;height:17px;border:0;background:#c6c7cb}
`) + `<div>${ic('drop','color:#999;transform:rotate(90deg) scale(1.3)')}</div><div style="width:17px"></div><div style="margin-left:auto">${ic('drop','color:#999;transform:rotate(-90deg) scale(1.3)')}</div><div class="c"></div>`);

define('work-area', () => css(`
  :host{width:1151px}
  .tabs{height:24px;display:flex;border-bottom:1px solid #a0a0a5}
  .tab{width:105px;height:24px;background:#646464;border:1px solid #77777a;border-bottom:0;display:flex;align-items:center;padding:0 0 2px 5px;font-size:11px;font-weight:700}
  .m{display:flex}
`) + `<div class="tabs"><div class="tab">${ic('rel')}${tx('Relações',45,'margin-left:8px')}${ic('close','margin-left:12px;color:#ccc')}</div></div><div class="m"><relation-canvas></relation-canvas><scroll-v></scroll-v></div><scroll-h></scroll-h>`);

const APPS = ['edge','chrome','folder','store','media','ppt','xls','doc','one','code','mail','access'];
define('task-bar', () => css(`
  :host{height:40px;background:#30261c;display:flex}
  .w{width:48px;display:flex;align-items:center;justify-content:center}
  .s{width:344px;background:#f2f2f2;border-top:1px solid #c4c0be;color:#333;display:flex;align-items:center;font-size:15px;padding:0 0 1px 9px}
  .a{width:47px;display:flex;align-items:center;justify-content:center;position:relative;padding-right:2px}
  .a::after{content:"";position:absolute;left:4px;width:38px;bottom:0;height:2px;background:var(--u,transparent)}
  .acc{background:#5c534b;padding-right:0}.acc::after{left:0;width:46px}
  .tray{display:flex;align-items:center;width:360px}
  .clk{margin:1px 0 0 13px;width:58px;display:grid;justify-items:center;grid-template-rows:18px 18px}
`) + `<div class="w">${ic('win')}</div><div class="s">${ic('cort')}${tx('Digite aqui para pesquisar',175,'margin-left:9px;height:20px;line-height:20px')}${ic('mic','margin-left:102px')}</div><div class="w" style="width:51px;padding-right:3px">${ic('task')}</div>` +
APPS.map(a=>`<div class="a ${a=='access'?'acc':''}" style="${a=='access'?'width:46px;':''}--u:${a=='edge'||a=='access'?'#ee96f5':a=='folder'?'linear-gradient(90deg,#ee96f5 29px,#7b4d78 29px,#b66fbd 31px)':'transparent'}">${ic(a)}</div>`).join('') +
`<div class="tray">${ic('people','margin-left:25px')}${ic('chev','margin-left:22px')}${ic('rvol','margin-left:10px')}${ic('cloud','margin-left:11px')}${ic('bat','margin-left:7px')}${ic('wifi','margin-left:10px')}${ic('spk','margin-left:8px')}${tx('POR',23,'margin-left:10px')}<div class="clk">${tx('23:51',27)}${tx('23/04/2019',58)}</div>${ic('notif','margin-left:18px')}<div style="width:1px;height:40px;background:#81796f;margin-left:19px"></div></div>`);

define('access-app', () => css(`
  :host{width:1366px;height:768px;background:#32312f}
  .m{display:flex;height:545px}
  .sp{width:5px;background:#6a6a6a}
  .st{height:22px;border-top:1px solid #3e3e3e;padding:2px 0 0 7px;font-size:11px}
`) + `<title-bar></title-bar><ribbon-tabs></ribbon-tabs><ribbon-body></ribbon-body><div class="m"><nav-pane></nav-pane><div class="sp"></div><work-area></work-area></div><div class="st">${tx('Pronto',35)}</div><task-bar></task-bar>`);

/* Single-line label that condenses or tracks its text to an exact width. */
customElements.define('fit-text', class extends HTMLElement {
  connectedCallback(){
    if(this.shadowRoot) return;
    const w = +this.getAttribute('w');
    this.attachShadow({mode:'open'}).innerHTML = `<style>:host{display:block;flex:none;width:${w}px;height:16px;line-height:16px;white-space:nowrap}span{display:inline-block;transform-origin:0 50%}</style><span><slot></slot></span>`;
    const s = this.shadowRoot.querySelector('span'), n = s.offsetWidth && s.getBoundingClientRect().width;
    if(!n) return;
    if(w < n) s.style.transform = `scaleX(${w/n})`;
    else s.style.letterSpacing = (w-n)/this.textContent.length+'px';
  }
});
</script>
</body>
</html>
